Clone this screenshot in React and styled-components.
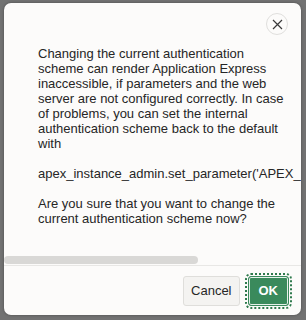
import React from 'react';
import styled, { createGlobalStyle } from 'styled-components';

const GlobalStyle = createGlobalStyle`
  html, body {
    margin: 0;
    padding: 0;
    background: #727272;
  }
  body {
    font-family: 'Liberation Sans', Arial, sans-serif;
  }
`;

const Backdrop = styled.div`
  width: 306px;
  height: 320px;
  box-sizing: border-box;
  padding: 3px 5px 5px 4px;
  display: flex;
  background: #727272;
`;

const Dialog = styled.div`
  flex: 1;
  min-width: 0;
  display: flex;
  flex-direction: column;
  background: #fcfbfa;
  border-radius: 7px;
  overflow: hidden;
  box-shadow: 0 0 3px rgba(0, 0, 0, .35);
`;

const Header = styled.div`
  display: flex;
  justify-content: flex-end;
  padding: 10px 13px 0 0;
`;

const CloseButton = styled.button`
  width: 22px;
  height: 22px;
  padding: 0;
  border-radius: 50%;
  border: 1px solid #e0dfdd;
  background: #fcfbfa;
  display: flex;
  align-items: center;
  justify-content: center;
  color: #3a3a3a;
`;

const Body = styled.div`
  flex: 1;
  min-height: 0;
  display: flex;
  flex-direction: column;
`;

const Content = styled.div`
  flex: 1;
  overflow: hidden;
  padding: 11px 6px 0 34px;
  font-size: 13px;
  line-height: 15px;
  color: #262626;
`;

const Paragraph = styled.p`
  margin: 0 0 15px;
  white-space: ${p => (p.$code ? 'nowrap' : 'normal')};
  &:last-child {
    margin-bottom: 0;
  }
`;

const ScrollTrack = styled.div`
  height: 8px;
  margin-bottom: 1px;
`;

const ScrollThumb = styled.div`
  width: 194px;
  height: 100%;
  border-radius: 4px;
  background: #d9d8d6;
`;

const Footer = styled.div`
  height: 50px;
  box-sizing: border-box;
  border-top: 1px solid #e8e7e5;
  display: flex;
  align-items: center;
  justify-content: flex-end;
  gap: 8px;
  padding: 0 12px 0 0;
`;

const Button = styled.button`
  height: 30px;
  box-sizing: border-box;
  padding: 0 ${p => (p.$primary ? '10px' : '7px')};
  border-radius: 3px;
  font-family: 'Liberation Sans', Arial, sans-serif;
  font-size: 13px;
  font-weight: ${p => (p.$primary ? 700 : 400)};
  color: ${p => (p.$primary ? '#fff' : '#262626')};
  background: ${p => (p.$primary ? '#3a8a5c' : '#f4f3f1')};
  border: 1px solid ${p => (p.$primary ? '#3a8a5c' : '#dfdedb')};
  box-shadow: ${p => (p.$primary ? 'inset 0 0 0 1px #e6f0ea' : 'none')};
  outline: ${p => (p.$primary ? '2px dotted #2f7a4d' : 'none')};
  outline-offset: 1px;
`;

function App() {
  return (
    <Backdrop>
      <GlobalStyle />
      <Dialog>
        <Header>
          <CloseButton aria-label="Close">
            <svg width="11" height="11" viewBox="0 0 11 11">
              <path d="M1 1 L10 10 M10 1 L1 10" stroke="currentColor" strokeWidth="1.2" fill="none" />
            </svg>
          </CloseButton>
        </Header>
        <Body>
          <Content>
            <Paragraph>
              Changing the current authentication<br />
              scheme can render Application Express<br />
              inaccessible, if parameters and the web<br />
              server are not configured correctly. In case<br />
              of problems, you can set the internal<br />
              authentication scheme back to the default<br />
              with
            </Paragraph>
            <Paragraph $code>
              apex_instance_admin.set_parameter('APEX_BUILDER_AUTHENTICATION','APEX');
            </Paragraph>
            <Paragraph>
              Are you sure that you want to change the<br />
              current authentication scheme now?
            </Paragraph>
          </Content>
          <ScrollTrack>
            <ScrollThumb />
          </ScrollTrack>
        </Body>
        <Footer>
          <Button>Cancel</Button>
          <Button $primary>OK</Button>
        </Footer>
      </Dialog>
    </Backdrop>
  );
}

export default App;
